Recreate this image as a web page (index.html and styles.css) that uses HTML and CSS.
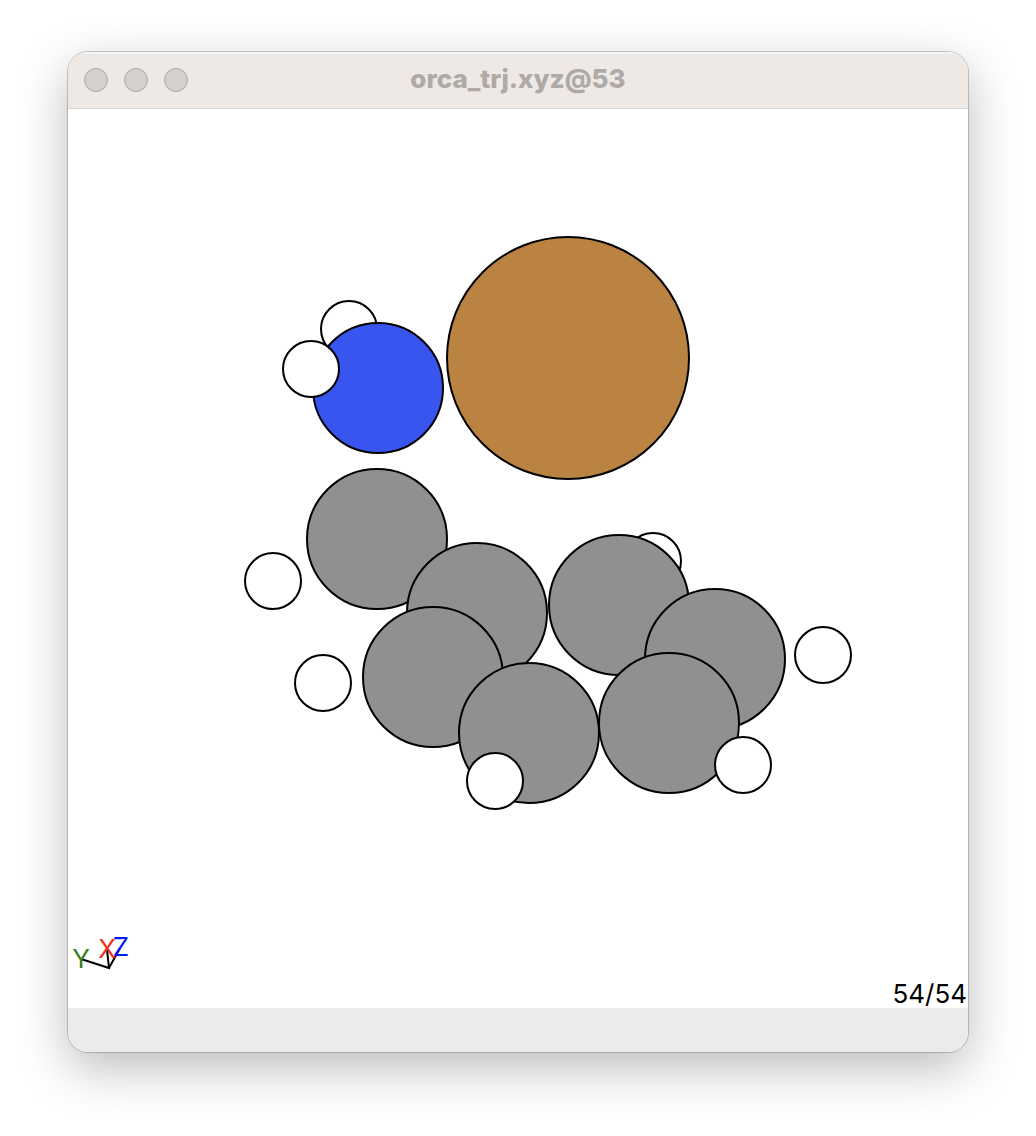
FILE: index.html
```html
<!DOCTYPE html>
<html lang="en">
<head>
<meta charset="utf-8">
<meta name="viewport" content="width=device-width, initial-scale=1">
<title>orca_trj.xyz@53</title>
<link rel="stylesheet" href="styles.css">
</head>
<body>
<main class="window">
  <header class="titlebar">
    <div class="controls">
      <button class="control" type="button" aria-label="Close"></button>
      <button class="control" type="button" aria-label="Minimize"></button>
      <button class="control" type="button" aria-label="Zoom"></button>
    </div>
    <h1 class="title">orca_trj.xyz@53</h1>
  </header>
  <section class="viewport">
    <svg class="scene" viewBox="0 0 900 899" role="img" aria-label="Molecule">
      <!-- Atoms, drawn back to front -->
      <g class="atoms">
        <circle class="hydrogen" cx="281" cy="220" r="28"/>
        <circle class="nitrogen" cx="310" cy="279" r="65"/>
        <circle class="hydrogen" cx="243" cy="260" r="28"/>
        <circle class="metal" cx="500" cy="249" r="121"/>
        <circle class="carbon" cx="309" cy="430" r="70"/>
        <circle class="hydrogen" cx="205" cy="472" r="28"/>
        <circle class="carbon" cx="409" cy="504" r="70"/>
        <circle class="carbon" cx="365" cy="568" r="70"/>
        <circle class="hydrogen" cx="585" cy="452" r="28"/>
        <circle class="carbon" cx="551" cy="496" r="70"/>
        <circle class="carbon" cx="647" cy="550" r="70"/>
        <circle class="carbon" cx="461" cy="624" r="70"/>
        <circle class="carbon" cx="601" cy="614" r="70"/>
        <circle class="hydrogen" cx="255" cy="574" r="28"/>
        <circle class="hydrogen" cx="427" cy="672" r="28"/>
        <circle class="hydrogen" cx="755" cy="546" r="28"/>
        <circle class="hydrogen" cx="675" cy="656" r="28"/>
      </g>
      <!-- Orientation axes -->
      <path class="axes" d="M13 850L41 859L39 841M41 859L52 839"/>
      <text class="axis axis-y" x="13" y="859">Y</text>
      <text class="axis axis-x" x="39" y="849">X</text>
      <text class="axis axis-z" x="53" y="847">Z</text>
    </svg>
    <p class="frame">54/54</p>
  </section>
  <footer class="statusbar"></footer>
</main>
</body>
</html>
```
FILE: styles.css
```css
* {
  box-sizing: border-box;
}

body {
  margin: 0;
  padding: 52px 68px 84px;
  background: #fff;
  font-family: Inter, "Liberation Sans", sans-serif;
}

.window {
  overflow: hidden;
  border-radius: 20px;
  background: #fff;
  box-shadow:
    0 0 0 1px rgba(0, 0, 0, 0.2),
    0 16px 50px rgba(0, 0, 0, 0.27);
}

.titlebar {
  display: grid;
  grid-template-columns: 1fr auto 1fr;
  align-items: center;
  height: 57px;
  padding: 0 16px;
  border-bottom: 1px solid #d5d3d2;
  background: #eee9e5;
  box-shadow: inset 0 2px 0 #f7f5f3;
}

.controls {
  display: flex;
  gap: 16px;
}

.control {
  width: 24px;
  height: 24px;
  padding: 0;
  border: 1px solid #aea9a6;
  border-radius: 50%;
  background: #d5d0cd;
}

.title {
  margin: 0;
  padding-bottom: 2px;
  color: #afaaa6;
  font-size: 26px;
  font-weight: 800;
  line-height: 32px;
}

.viewport {
  position: relative;
}

.scene {
  display: block;
  width: 100%;
  height: auto;
}

.atoms,
.axes {
  stroke: #000;
  stroke-width: 2;
}

.axes {
  fill: none;
}

.hydrogen {
  fill: #fff;
}

.carbon {
  fill: #909090;
}

.nitrogen {
  fill: #3855ef;
}

.metal {
  fill: #bb8342;
}

.axis {
  font-size: 26px;
  text-anchor: middle;
}

.axis-x {
  fill: #ea3323;
}

.axis-y {
  fill: #377e22;
}

.axis-z {
  fill: #0019f5;
}

.frame {
  position: absolute;
  right: 1px;
  bottom: 0;
  margin: 0;
  color: #000;
  font-size: 26px;
  line-height: 28px;
}

.statusbar {
  height: 44px;
  background: #ebebeb;
}
```
